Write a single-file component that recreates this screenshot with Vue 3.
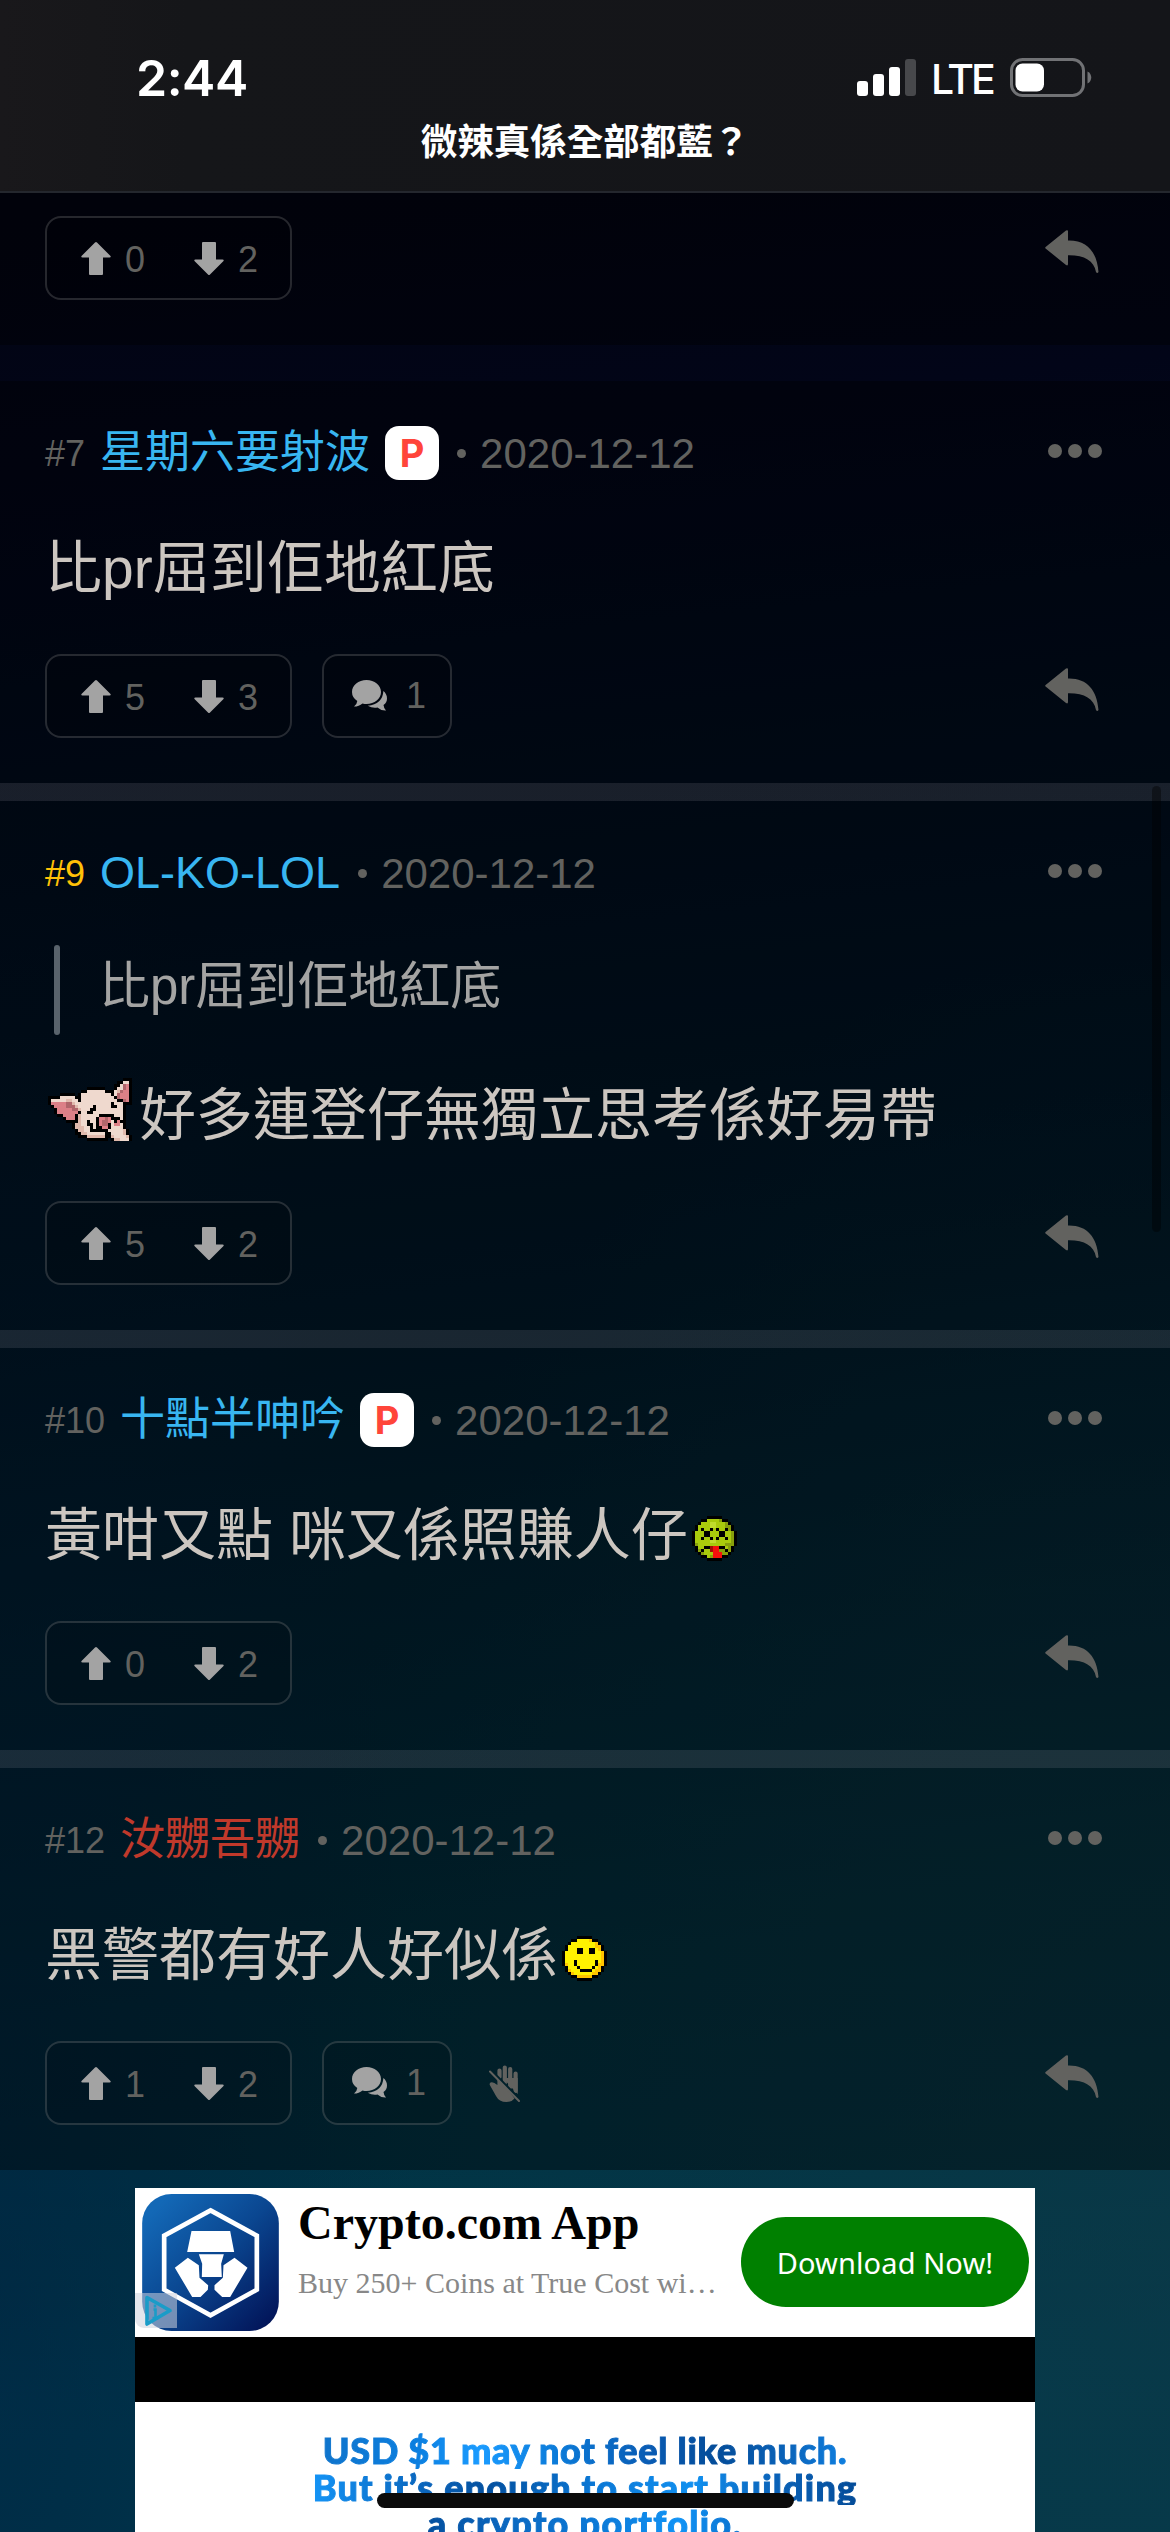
<script setup>
const smiley = [
  '.....kkkkk.....',
  '...kkyyyyokk...',
  '..kyyyyyyyyok..',
  '.kyyyyyyyyyook.',
  '.kyyykkyykkyok.',
  'kyyyykkyykkyyok',
  'kyyyyyyyyyyyyok',
  'kyyyyyyyyyyyyok',
  'kyyykyyyyyykyok',
  'koyykyyyyyykook',
  '.kyyykyyyykyok.',
  '.koyyykkkkyook.',
  '..koyyyyyyook..',
  '...kkoooookk...',
  '.....kkkkk.....',
]
const sick = [
  '.....kkkkk.....',
  '...kkgggghkk...',
  '..kgggllggghk..',
  '.kggggllggghhk.',
  '.kgkggkgkggkhk.',
  'kgggkkgggkkgghk',
  'kgggkkgggkkgghk',
  'kggkggkgkggkghk',
  'kgggggllggggghk',
  'khggggggggghhhk',
  '.kggkkmrrkkghk.',
  '.khkggmrrhhkhk.',
  '..khgggrrrhhk..',
  '...kkghrrrkk...',
  '.....kkkkk.....',
]
const pig = [
  '.........................kkk',
  '.......................kkwwk',
  '......................kkwdpk',
  '.............kkkkkk...kwwdpk',
  '...........kkwwwwwwkkkwedppk',
  '....kkkkk.kwwwwwwwwwwkwdpppk',
  'kkkkwwwwwkkwwwwwwwwwwwkdpppk',
  'kwwwwweewwkwwwwwwwwwwwwkkdpk',
  'kpppppddewwwwwwwwwwwwkwwwkkk',
  '.kppppdddewwwwwkwwwwwkkwwk..',
  '..kpppppddewwwkkwwwwwwwwwk..',
  '..kpppppppkwwkkwwwwwwwwwwk..',
  '...kkppppkewwwwwwkkkkkwwwk..',
  '.....kpppkewwwwwkppdpkkkwk..',
  '......kkkkewwkwwkpddpwkpkk..',
  '........keewwkkwkpddkwppwk..',
  '........keeewwkwkkppkwwwwk..',
  '.........keewwkkkkkkwwwwwek.',
  '.........kkeewwwwwwkkwwwwek.',
  '..........kkkeeeeeekkewwwwek',
  '.............kkkkkkk.keewwwk',
]
const palette = {
  k: '#000', y: '#fff200', o: '#ffc400', g: '#a9cb0c', h: '#879f0b', l: '#c0dc2c',
  r: '#f5100c', m: '#a30d05', w: '#efd9ce', e: '#e0b9ac', p: '#dc8087', d: '#b0666b',
}
const toCells = (rows) => {
  const cells = []
  rows.forEach((row, y) => {
    for (let x = 0; x < row.length;) {
      let n = 1
      while (row[x + n] === row[x]) n++
      if (row[x] !== '.') cells.push({ x, y, w: n, fill: palette[row[x]] })
      x += n
    }
  })
  return { w: rows[0].length, h: rows.length, cells }
}
const emojis = { smiley: toCells(smiley), sick: toCells(sick), pig: toCells(pig) }

const posts = [
  { id: 6, up: 0, down: 2, partial: true },
  { id: 7, name: '星期六要射波', tone: 'blue', badge: true, text: '比pr屈到佢地紅底', up: 5, down: 3, replies: 1, gapBefore: true },
  { id: 9, op: true, name: 'OL-KO-LOL', tone: 'blue', quote: '比pr屈到佢地紅底', lead: 'pig', text: '好多連登仔無獨立思考係好易帶', up: 5, down: 2 },
  { id: 10, name: '十點半呻吟', tone: 'blue', badge: true, text: '黃咁又點 咪又係照賺人仔', tail: 'sick', up: 0, down: 2 },
  { id: 12, name: '汝嬲吾嬲', tone: 'red', text: '黑警都有好人好似係', tail: 'smiley', up: 1, down: 2, replies: 1, muted: true },
]
</script>

<template>
  <div class="screen">
    <header class="top">
      <div class="status">
        <span class="clock">2:44</span>
        <div class="indicators">
          <svg class="signal" viewBox="0 0 59 37">
            <rect x="0" y="22" width="11" height="15" rx="3" fill="#fff" />
            <rect x="16" y="15" width="11" height="22" rx="3" fill="#fff" />
            <rect x="32" y="8" width="11" height="29" rx="3" fill="#fff" />
            <rect x="48" y="0" width="11" height="37" rx="3" fill="#47484b" />
          </svg>
          <span class="lte">LTE</span>
          <svg class="battery" viewBox="0 0 82 39">
            <rect x="1.5" y="1.5" width="72" height="36" rx="11" fill="none" stroke="#717275" stroke-width="3" />
            <rect x="5.500" y="5.500" width="28.500" height="28" rx="7" fill="#fff" />
            <path d="M77.500 13.500c5 2 5 10 0 12z" fill="#717275" />
          </svg>
        </div>
      </div>
      <h1 class="title">微辣真係全部都藍？</h1>
    </header>

    <main class="thread">
      <article v-for="p in posts" :key="p.id" class="post" :class="{ partial: p.partial, spaced: p.gapBefore }">
        <div v-if="!p.partial" class="meta">
          <span class="num" :class="{ op: p.op }">#{{ p.id }}</span>
          <span class="name" :class="p.tone">{{ p.name }}</span>
          <span v-if="p.badge" class="badge">P</span>
          <i class="dot"></i>
          <time class="date">2020-12-12</time>
          <span class="more"><i></i><i></i><i></i></span>
        </div>
        <blockquote v-if="p.quote" class="quote"><i></i><span>{{ p.quote }}</span></blockquote>
        <div v-if="p.text" class="body">
          <svg v-if="p.lead" class="lead" :viewBox="`0 0 ${emojis[p.lead].w} ${emojis[p.lead].h}`" shape-rendering="crispEdges">
            <rect v-for="(c, i) in emojis[p.lead].cells" :key="i" :x="c.x" :y="c.y" :width="c.w" height="1" :fill="c.fill" />
          </svg>
          <span>{{ p.text }}</span>
          <svg v-if="p.tail" class="tail" :viewBox="`0 0 ${emojis[p.tail].w} ${emojis[p.tail].h}`" shape-rendering="crispEdges">
            <rect v-for="(c, i) in emojis[p.tail].cells" :key="i" :x="c.x" :y="c.y" :width="c.w" height="1" :fill="c.fill" />
          </svg>
        </div>
        <div class="actions">
          <div class="pill votes">
            <svg class="arrow" viewBox="0 0 30 33"><path d="M14 .6q1-1 2 0L29.500 14q.8 1.500-1 1.500H22V32q0 1-1 1H9q-1 0-1-1V15.500H1.500q-1.800 0-1-1.500z" /></svg>
            <span class="count">{{ p.up }}</span>
            <svg class="arrow down" viewBox="0 0 30 33"><path d="M14 .6q1-1 2 0L29.500 14q.8 1.500-1 1.500H22V32q0 1-1 1H9q-1 0-1-1V15.500H1.500q-1.800 0-1-1.500z" /></svg>
            <span class="count">{{ p.down }}</span>
          </div>
          <div v-if="p.replies" class="pill replies">
            <svg class="bubbles" viewBox="0 0 35 31">
              <path d="M14.500 0C22.500 0 29 5.300 29 12S22.500 24 14.500 24q-2 0-4-.5Q7 26.600 2 26.600q3-2.300 3.300-5.600Q0 17.500 0 12C0 5.300 6.500 0 14.500 0z" />
              <path d="M31.400 11q3.600 3 3.600 7.500 0 4-3.500 6.500.3 3.300 2.500 5.500-5 .3-8.500-3-5 1-9.800-1.800Q30.500 24.500 31.400 11z" />
            </svg>
            <span class="count">{{ p.replies }}</span>
          </div>
          <svg v-if="p.muted" class="hand" viewBox="0 0 31 37">
            <g fill="none" stroke="#62625f" stroke-width="4.200" stroke-linecap="round">
              <path d="M10.500 5.500V12M15.800 2.500V18M21.200 4V22M26.600 8.500V26" />
            </g>
            <path d="M8.400 10v10Q5 17 2.600 17.200 0 17.600.8 20L7 31q3 6 10.500 6 5.500 0 8-3.500z M13.700 13h15V29z" fill="#62625f" />
            <path d="M1 4.500L32 36" stroke="#00202a" stroke-width="3" />
            <path d="M1 6.500L30 36" stroke="#62625f" stroke-width="2" stroke-linecap="round" />
          </svg>
          <svg class="reply" viewBox="0 0 55 43"><path d="M21 .6q2-1.300 2 1V10.500C42 10 52 22 53.500 42q-1.300 2-2.500 0C49 30.500 39 25 23 25.300V34q0 2.200-2 1L.6 18.500q-.9-.8 0-1.600z" /></svg>
        </div>
      </article>
      <i class="scrollbar"></i>
    </main>

    <section class="ad">
      <div class="ad-head">
        <svg class="app-icon" viewBox="35 41 410 411">
          <defs>
            <linearGradient id="crypto" x1="0" y1="0" x2="1" y2="1">
              <stop offset="0.1" stop-color="#1368b6" />
              <stop offset="0.5" stop-color="#0a4690" />
              <stop offset="0.95" stop-color="#021458" />
            </linearGradient>
          </defs>
          <rect x="35" y="41" width="410" height="411" rx="88" fill="url(#crypto)" />
          <path d="M240 90l139 76v162l-139 77-139-77V166z" fill="none" stroke="#fff" stroke-width="14" />
          <path d="M183 152h116l12 63H170zM205 222h75l-8 28 2 40h-60l1-40zM172 232l33 23 2 37 26 23-1 13-22 22h-25l-52-88zM312 232l-33 23-2 37-25 23v13l23 22h24l52-88z" fill="#fff" />
        </svg>
        <div class="ad-copy">
          <strong>Crypto.com App</strong>
          <span>Buy 250+ Coins at True Cost wi…</span>
        </div>
        <span class="cta">Download Now!</span>
        <span class="adchoices">
          <svg viewBox="0 0 42 35"><path d="M12 4.500L35 17.500 12 31z" fill="none" stroke="#1a9cc8" stroke-width="3.600" stroke-linejoin="round" /><path d="M18.500 16.500h2V25m-3 0h6M20 11.500v3" fill="none" stroke="#1a9cc8" stroke-width="2.600" /></svg>
        </span>
      </div>
      <div class="ad-bar"></div>
      <div class="ad-hero">
        <p class="l1">USD $1 may not feel like much.</p>
        <p class="l2">But it’s enough to start building</p>
        <p class="l3">a crypto portfolio.</p>
      </div>
    </section>
    <i class="home"></i>
  </div>
</template>

<style>
body { margin: 0; background: #00121f; }
</style>

<style scoped>
.screen {
  position: relative;
  width: 1170px;
  height: 2532px;
  overflow: hidden;
  display: flex;
  flex-direction: column;
  font-family: "Liberation Sans", "Noto Sans CJK TC", sans-serif;
  background:
    radial-gradient(ellipse 900px 1300px at 100% 88%, rgba(18, 58, 68, 0.5), rgba(18, 58, 68, 0)),
    radial-gradient(ellipse 420px 1500px at 0% 90%, rgba(0, 28, 62, 0.45), rgba(0, 28, 62, 0)),
    linear-gradient(174deg, #020412 8%, #020518 18%, #000f20 34%, #001a2b 52%, #003040 76%, #00384c 92%);
}
i { font-style: normal; }
.top {
  box-sizing: border-box;
  height: 193px;
  flex: none;
  border-bottom: 2px solid #24272e;
  background: linear-gradient(90deg, #19181b 0%, #151619 16%, #141519 100%);
  color: #fff;
}
.status {
  height: 119px;
  display: flex;
  justify-content: space-between;
  padding: 0 78px 0 136px;
}
.clock {
  font: 600 50px/60px Inter, sans-serif;
  letter-spacing: -0.5px;
  margin-top: 48px;
}
.indicators { display: flex; align-items: flex-start; padding-top: 58px; }
.signal { width: 59px; height: 37px; margin-top: 1px; }
.lte { font: 500 41px/41px Inter, sans-serif; letter-spacing: -3px; margin: 1px 0 0 15px; width: 62px; }
.battery { width: 82px; height: 39px; margin-left: 17px; }
.title {
  margin: 0;
  font: 700 36.500px/44px "Noto Sans CJK TC", sans-serif;
  text-align: center;
  margin-top: -1px;
}
.thread { position: relative; flex: none; }
.post {
  box-sizing: border-box;
  padding: 0 68px 45px 45px;
  background: rgba(0, 0, 0, 0.38);
}
.post + .post:not(.spaced) {
  position: relative;
  margin-top: 18px;
}
.post + .post:not(.spaced)::before {
  content: "";
  position: absolute;
  left: 0;
  right: 0;
  top: -18px;
  height: 18px;
  background: linear-gradient(rgba(150, 147, 158, 0.17), rgba(150, 147, 158, 0.17)), rgba(0, 0, 0, 0.36);
}
.partial { padding-top: 23px; }
.spaced { margin-top: 36px; }
.meta { height: 144px; display: flex; align-items: center; white-space: nowrap; }
.num { font-size: 36px; color: #62625f; padding-top: 1px; }
.num.op { color: #ffc107; }
.name { font-size: 45px; line-height: 60px; margin-left: 15px; }
.blue { color: #38b6f1; }
.red { color: #c0392b; }
.badge {
  flex: none;
  width: 54px;
  height: 54px;
  margin-left: 15px;
  border-radius: 14px;
  background: #fff;
  color: #ff453a;
  font: 700 38px/54px Inter, "Liberation Sans", sans-serif;
  text-align: center;
}
.dot { width: 9px; height: 9px; border-radius: 50%; background: #62625f; margin: 0 14px 0 18px; }
.date { font-size: 42px; color: #62625f; padding-top: 1px; }
.more { margin: -4px 0 0 auto; display: flex; gap: 6px; }
.more i { width: 14px; height: 14px; border-radius: 50%; background: #62625f; }
.quote { margin: 0 0 37px; height: 90px; display: flex; align-items: center; padding-left: 9px; }
.quote i { width: 6px; height: 90px; border-radius: 3px; background: #59636c; margin-right: 39px; }
.quote span { font-size: 51px; line-height: 80px; color: #a4a4a3; margin-top: -7px; }
.body {
  height: 84px;
  display: flex;
  align-items: center;
  font-size: 57px;
  line-height: 84px;
  color: #ccc6c0;
  white-space: nowrap;
}
.body span { padding-top: 2px; }
.lead { flex: none; width: 84px; height: 63px; margin: -9px 7px 0 3px; }
.tail { flex: none; width: 45px; height: 45px; margin: 8px 0 0 4px; }
.actions { height: 84px; margin-top: 45px; display: flex; align-items: center; }
.partial .actions { margin-top: 0; }
.pill {
  box-sizing: border-box;
  flex: none;
  height: 84px;
  border: 2px solid rgba(160, 160, 160, 0.24);
  border-radius: 16px;
  background: rgba(0, 0, 0, 0.12);
  display: flex;
  align-items: center;
}
.votes { width: 247px; padding-left: 34px; }
.replies { width: 130px; margin-left: 30px; padding-left: 28px; }
.arrow { flex: none; width: 30px; height: 33px; fill: #a3a3a3; margin-top: 1px; }
.arrow.down { transform: rotate(180deg); }
.count { flex: none; font-size: 36px; line-height: 40px; color: #62625f; margin-top: 3px; }
.votes .count { width: 69px; box-sizing: border-box; padding-left: 14px; margin-right: 14px; }
.votes .count:last-child { width: 40px; margin-right: 0; }
.bubbles { flex: none; width: 35px; height: 31px; fill: #a3a3a3; margin-top: -1px; }
.replies .count { padding-left: 19px; margin-top: 0; }
.hand { flex: none; width: 31px; height: 37px; margin-left: 37px; }
.reply { flex: none; width: 55px; height: 43px; fill: #62625f; margin: -13px 2px 0 auto; }
.scrollbar {
  position: absolute;
  right: 9px;
  top: 593px;
  width: 9px;
  height: 446px;
  border-radius: 5px;
  background: rgba(0, 0, 0, 0.4);
}
.ad {
  width: 900px;
  height: 344px;
  flex: none;
  margin: 18px auto 0;
  background: #fff;
  overflow: hidden;
}
.ad-head { position: relative; height: 149px; display: flex; box-sizing: border-box; padding: 6px 6px 0 7px; }
.app-icon { flex: none; width: 137px; height: 137px; }
.ad-copy { margin-left: 19px; display: flex; flex-direction: column; font-family: "Liberation Serif", serif; white-space: nowrap; width: 443px; flex: none; }
.ad-copy strong { font-size: 48px; line-height: 54px; color: #000; margin-top: 2px; }
.ad-copy span { font-size: 30px; line-height: 36px; color: #888; margin-top: 15px; }
.cta {
  width: 288px;
  height: 90px;
  margin-top: 23px;
  border-radius: 45px;
  background: #008000;
  color: #fff;
  font: 400 29px/91px "Noto Sans", sans-serif;
  letter-spacing: 0.1px;
  text-align: center;
  white-space: nowrap;
}
.adchoices { position: absolute; left: 0; top: 105px; width: 42px; height: 35px; background: rgba(205, 210, 220, 0.55); border-radius: 0 0 0 9px; }
.adchoices svg { display: block; width: 42px; height: 35px; }
.ad-bar { height: 65px; background: #000; }
.ad-hero { padding-top: 30px; }
.ad-hero p {
  width: max-content;
  margin: 0 auto;
  font: 900 36px/36.500px Lato, sans-serif;
  white-space: nowrap;
  color: transparent;
  -webkit-text-stroke: 1px transparent;
  background-clip: text;
  -webkit-background-clip: text;
}
.l1 { letter-spacing: 0.75px; background-image: linear-gradient(90deg, #0f74cc 0%, #0b7fe0 18%, #1a9bff 30%, #0b7ad8 45%, #0a5cb4 62%, #044c99 75%, #0a62b8 88%, #0f7fe0 100%); }
.l2 { letter-spacing: 1.200px; background-image: linear-gradient(90deg, #1493f5 0%, #0a62b8 22%, #04509f 32%, #0b78d6 52%, #1190f0 70%, #0a62b8 85%, #044c99 100%); }
.l3 { letter-spacing: 1.300px; background-image: linear-gradient(90deg, #04509f 0%, #0b68c0 25%, #0b7ad8 55%, #1193f5 80%, #0b70cc 100%); }
.home {
  position: absolute;
  left: 377px;
  bottom: 24px;
  width: 417px;
  height: 15px;
  border-radius: 8px;
  background: #0b0b0b;
}
</style>
